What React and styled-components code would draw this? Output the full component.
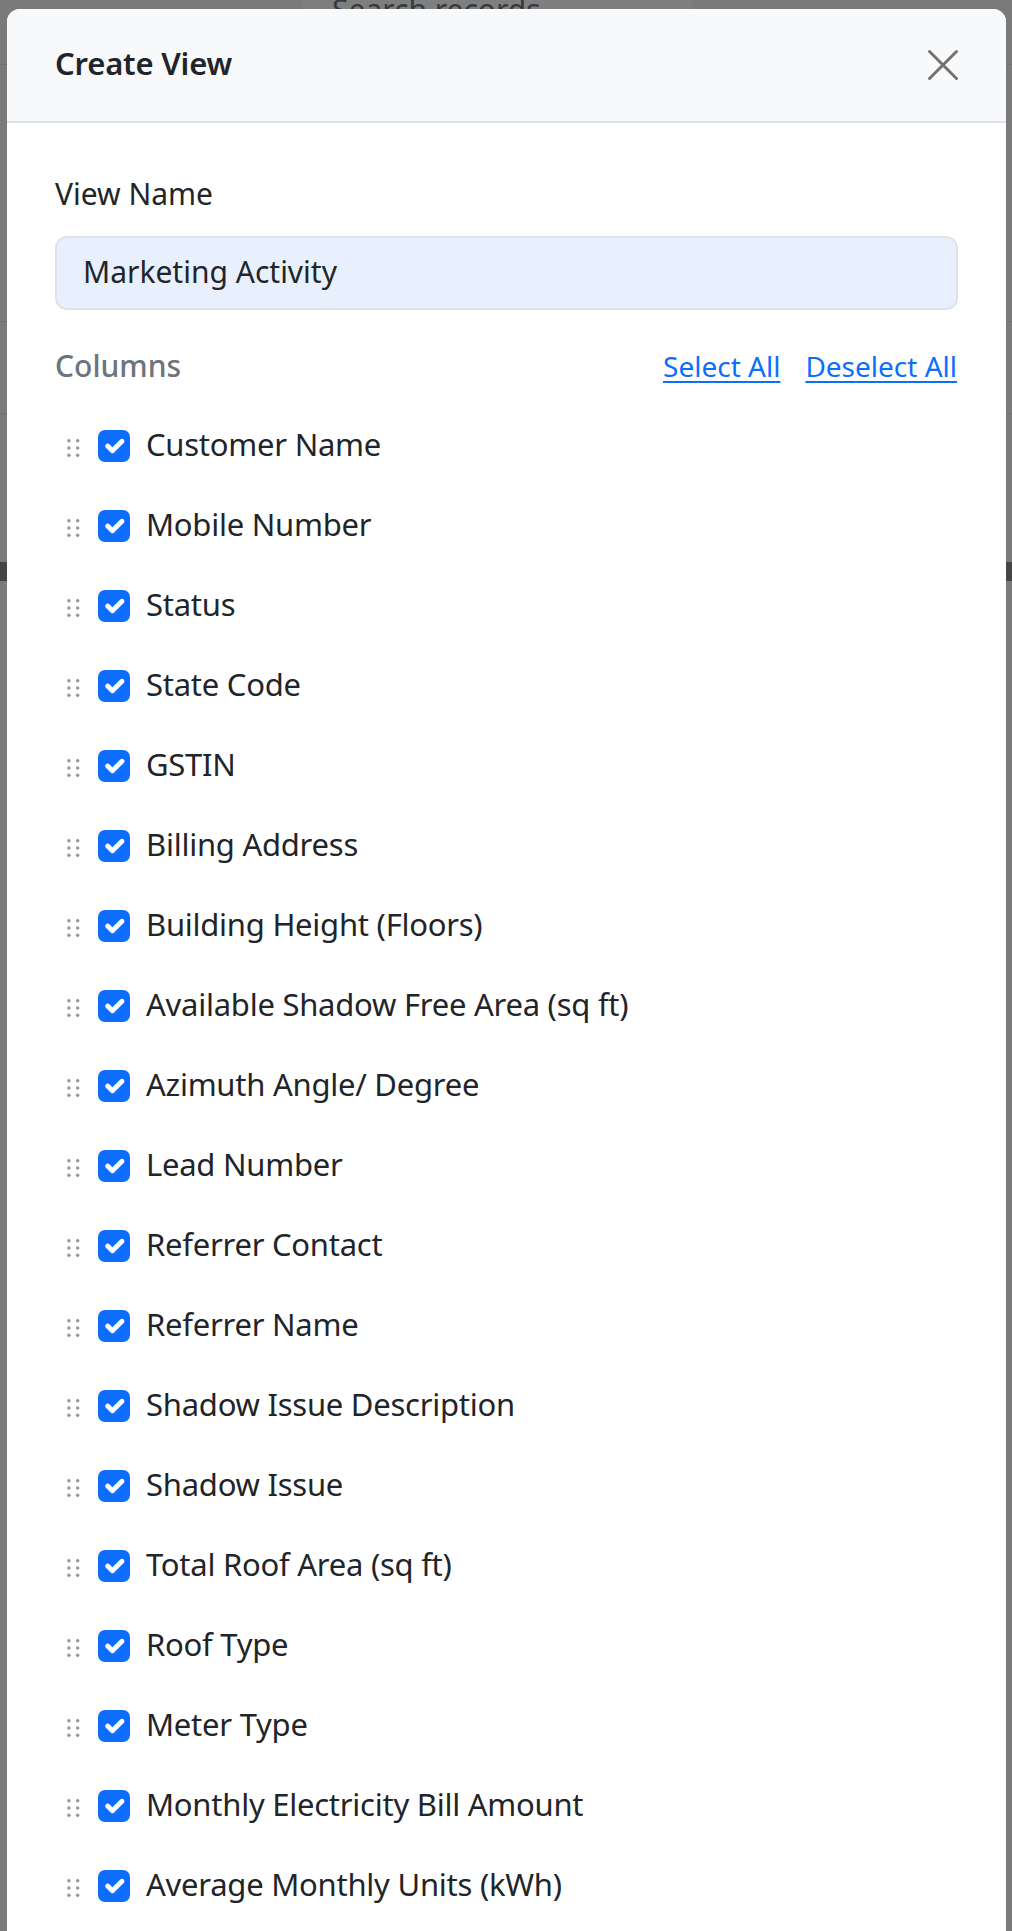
import React from "react"
import styled, { createGlobalStyle } from "styled-components"

const Global = createGlobalStyle`
  html, body {
    margin: 0;
    height: 100%;
    overflow: hidden;
  }
  body {
    background: #f5f5f5;
    font-family: "Noto Sans", "Open Sans", sans-serif;
    color: #212529;
  }
`

const columns = [
  "Customer Name",
  "Mobile Number",
  "Status",
  "State Code",
  "GSTIN",
  "Billing Address",
  "Building Height (Floors)",
  "Available Shadow Free Area (sq ft)",
  "Azimuth Angle/ Degree",
  "Lead Number",
  "Referrer Contact",
  "Referrer Name",
  "Shadow Issue Description",
  "Shadow Issue",
  "Total Roof Area (sq ft)",
  "Roof Type",
  "Meter Type",
  "Monthly Electricity Bill Amount",
  "Average Monthly Units (kWh)",
]

function App() {
  return (
    <>
      <Global />

      {/* records page sitting under the dialog */}
      <Page>
        <Topbar>
          <Search placeholder="Search records" readOnly />
        </Topbar>
        <Rule />
        <Rule />
        <Strip />
      </Page>

      <Backdrop>
        <Modal>
          <Header>
            <Title>Create View</Title>
            <Close aria-label="Close">
              <svg width="32" height="32" viewBox="0 0 32 32">
                <path
                  d="M2.5 2.5 29.5 29.5M29.5 2.5 2.5 29.5"
                  stroke="currentColor"
                  strokeWidth="3"
                  strokeLinecap="round"
                />
              </svg>
            </Close>
          </Header>

          <Body>
            <Label>View Name</Label>
            <NameInput value="Marketing Activity" readOnly />

            <ColumnsHead>
              <Heading>Columns</Heading>
              <Links>
                <LinkButton href="#">Select All</LinkButton>
                <LinkButton href="#">Deselect All</LinkButton>
              </Links>
            </ColumnsHead>

            <List>
              {columns.map(name => (
                <Row key={name}>
                  <Grip />
                  <Check />
                  <RowLabel>{name}</RowLabel>
                </Row>
              ))}
            </List>
          </Body>
        </Modal>
      </Backdrop>
    </>
  )
}

const Page = styled.div`
  display: flex;
  flex-direction: column;
`

const Topbar = styled.div`
  height: 65px;
  border-bottom: 1px solid #e2e2e2;
  box-sizing: border-box;
  padding-left: 303px;
`

const Search = styled.input`
  display: block;
  margin-top: -28px;
  width: 389px;
  height: 75px;
  box-sizing: border-box;
  padding: 0 29px;
  border: 0;
  border-radius: 12px;
  background: #fff;
  font: 30px "Noto Sans", sans-serif;
  outline: none;

  &::placeholder {
    color: #6c757d;
  }
`

const Rule = styled.div`
  height: 1px;
  margin-top: 256px;
  background: #e0e0e0;

  & + & {
    margin-top: 91px;
  }
`

const Strip = styled.div`
  height: 19px;
  margin-top: 148px;
  background: #8a8a8a;
`

const Backdrop = styled.div`
  position: fixed;
  inset: 0;
  background: rgba(0, 0, 0, 0.5);
  overflow: hidden;
`

const Modal = styled.div`
  margin: 9px 0 0 7px;
  width: 999px;
  min-height: 2000px;
  background: #fff;
  border-radius: 13px 13px 0 0;
  overflow: hidden;
`

const Header = styled.div`
  display: flex;
  align-items: center;
  justify-content: space-between;
  padding: 30px 47px 34px 48px;
  height: 48px;
  background: #f8f9fa;
  border-bottom: 2px solid #dee2e6;
`

const Title = styled.h5`
  margin: 0;
  font-size: 31px;
  line-height: 48px;
  font-weight: 600;
  letter-spacing: -0.2px;
  color: #212529;
`

const Close = styled.button`
  display: flex;
  margin-top: 4px;
  padding: 0;
  border: 0;
  background: none;
  color: #727272;
  cursor: pointer;
`

const Body = styled.div`
  padding: 48px 48px 0 48px;
`

const Label = styled.div`
  font-size: 30px;
  line-height: 45px;
  margin-bottom: 20px;
  color: #212529;
`

const NameInput = styled.input`
  display: block;
  width: 100%;
  box-sizing: border-box;
  height: 74px;
  padding: 0 26px 3px;
  border: 2px solid #dfe3e8;
  border-radius: 12px;
  background: #e8f0fe;
  font: 30px/45px "Noto Sans", sans-serif;
  color: #212529;
  outline: none;
`

const ColumnsHead = styled.div`
  display: flex;
  align-items: baseline;
  justify-content: space-between;
  margin-top: 33px;
  padding-right: 1px;
`

const Heading = styled.div`
  font-size: 30px;
  line-height: 45px;
  font-weight: 500;
  color: #6c757d;
`

const Links = styled.div`
  display: flex;
  gap: 25px;
`

const LinkButton = styled.a`
  font-size: 28px;
  color: #0d6efd;
  text-decoration: underline;
  text-underline-offset: 4px;
  text-decoration-thickness: 2px;
`

const List = styled.div`
  display: flex;
  flex-direction: column;
  gap: 32px;
  margin-top: 34px;
`

const Row = styled.div`
  display: flex;
  align-items: center;
  height: 48px;
`

const GripBox = styled.span`
  display: flex;
  width: 31px;
  margin-left: 12px;
  margin-top: 4px;
  color: #9a9a9a;
`

// two columns of three dots, the drag handle
const Grip = () => (
  <GripBox>
    <svg width="13" height="18" viewBox="0 0 13 18" fill="currentColor">
      {[1.8, 9, 16.2].map(cy => (
        <g key={cy}>
          <circle cx="1.9" cy={cy} r="1.8" />
          <circle cx="10.6" cy={cy} r="1.8" />
        </g>
      ))}
    </svg>
  </GripBox>
)

const CheckBox = styled.span`
  display: flex;
  flex: none;
  width: 32px;
  height: 32px;
  border-radius: 7px;
  background: #0d6efd;
`

const Check = () => (
  <CheckBox>
    <svg width="32" height="32" viewBox="0 0 20 20">
      <path
        d="m6 10 3 3 6-6"
        fill="none"
        stroke="#fff"
        strokeWidth="3"
        strokeLinecap="round"
        strokeLinejoin="round"
      />
    </svg>
  </CheckBox>
)

const RowLabel = styled.span`
  margin-left: 16px;
  padding-bottom: 4px;
  font-size: 31px;
  line-height: 44px;
  letter-spacing: -0.25px;
  color: #212529;
  white-space: nowrap;
`

export default App
